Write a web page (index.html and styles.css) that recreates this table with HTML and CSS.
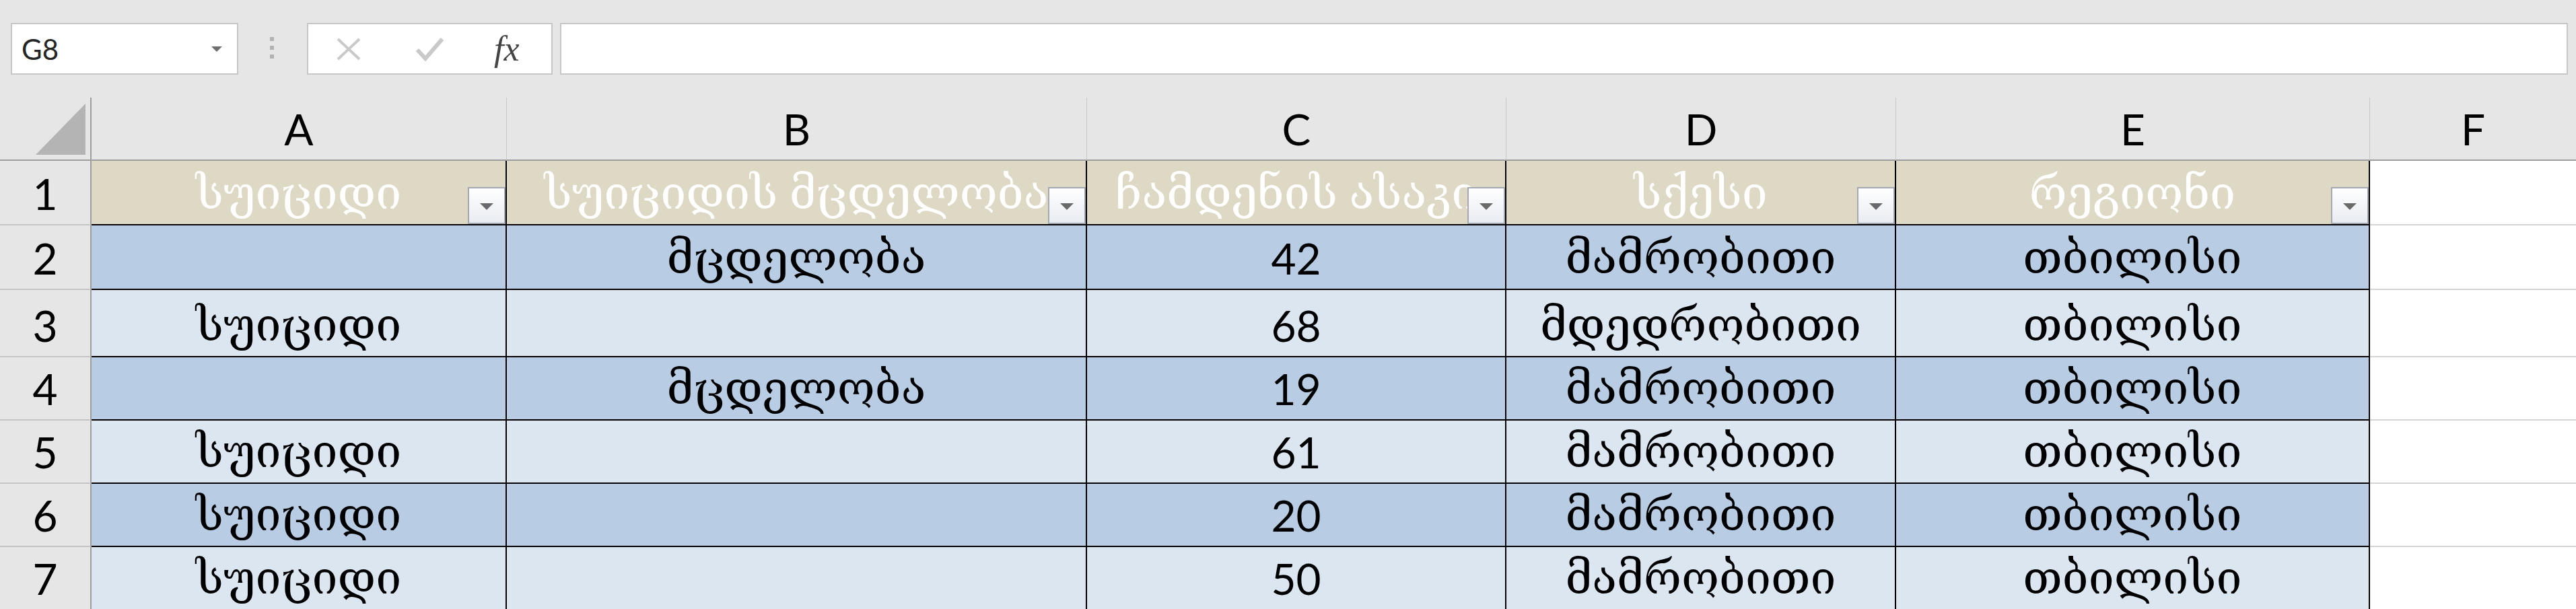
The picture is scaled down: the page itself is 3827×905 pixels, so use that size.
FILE: index.html
```html
<!DOCTYPE html>
<html lang="ka">
<head>
    <meta charset="UTF-8">
    <title>Book1 - Excel</title>
    <link rel="stylesheet" href="styles.css">
</head>
<body>
    <!-- formula bar -->
    <div class="fbar">
        <div class="namebox"><span>G8</span><i class="nb-arrow"></i></div>
        <div class="grip"><i></i><i></i><i></i></div>
        <div class="fbtns">
            <svg class="ico-x" width="38" height="34" viewBox="0 0 38 34"><path d="M3 2 L35 32 M35 2 L3 32" stroke="#c9c9c9" stroke-width="4" fill="none"/></svg>
            <svg class="ico-ok" width="43" height="36" viewBox="0 0 43 36"><path d="M3 19 L15 32 L40 3" stroke="#c9c9c9" stroke-width="6" fill="none"/></svg>
            <span class="fx">fx</span>
        </div>
        <div class="finput"></div>
    </div>

    <!-- sheet -->
    <div class="sheet">
        <div class="corner"><i class="tri"></i></div>
        <div class="colhd">A</div>
        <div class="colhd">B</div>
        <div class="colhd">C</div>
        <div class="colhd">D</div>
        <div class="colhd">E</div>
        <div class="colhd last">F</div>

        <div class="rowhd">1</div>
        <div class="cell hd"><span class="ka">სუიციდი</span><b class="filter"></b></div>
        <div class="cell hd"><span class="ka">სუიციდის მცდელობა</span><b class="filter"></b></div>
        <div class="cell hd"><span class="ka">ჩამდენის ასაკი</span><b class="filter"></b></div>
        <div class="cell hd"><span class="ka">სქესი</span><b class="filter"></b></div>
        <div class="cell hd"><span class="ka">რეგიონი</span><b class="filter"></b></div>
        <div class="cell free"></div>

        <div class="rowhd">2</div>
        <div class="cell dark"></div>
        <div class="cell dark"><span class="ka">მცდელობა</span></div>
        <div class="cell dark">42</div>
        <div class="cell dark"><span class="ka">მამრობითი</span></div>
        <div class="cell dark"><span class="ka">თბილისი</span></div>
        <div class="cell free"></div>

        <div class="rowhd">3</div>
        <div class="cell light"><span class="ka">სუიციდი</span></div>
        <div class="cell light"></div>
        <div class="cell light">68</div>
        <div class="cell light"><span class="ka">მდედრობითი</span></div>
        <div class="cell light"><span class="ka">თბილისი</span></div>
        <div class="cell free"></div>

        <div class="rowhd">4</div>
        <div class="cell dark"></div>
        <div class="cell dark"><span class="ka">მცდელობა</span></div>
        <div class="cell dark">19</div>
        <div class="cell dark"><span class="ka">მამრობითი</span></div>
        <div class="cell dark"><span class="ka">თბილისი</span></div>
        <div class="cell free"></div>

        <div class="rowhd">5</div>
        <div class="cell light"><span class="ka">სუიციდი</span></div>
        <div class="cell light"></div>
        <div class="cell light">61</div>
        <div class="cell light"><span class="ka">მამრობითი</span></div>
        <div class="cell light"><span class="ka">თბილისი</span></div>
        <div class="cell free"></div>

        <div class="rowhd">6</div>
        <div class="cell dark"><span class="ka">სუიციდი</span></div>
        <div class="cell dark"></div>
        <div class="cell dark">20</div>
        <div class="cell dark"><span class="ka">მამრობითი</span></div>
        <div class="cell dark"><span class="ka">თბილისი</span></div>
        <div class="cell free"></div>

        <div class="rowhd">7</div>
        <div class="cell light"><span class="ka">სუიციდი</span></div>
        <div class="cell light"></div>
        <div class="cell light">50</div>
        <div class="cell light"><span class="ka">მამრობითი</span></div>
        <div class="cell light"><span class="ka">თბილისი</span></div>
        <div class="cell free"></div>
    </div>
</body>
</html>
```

FILE: styles.css
```css
* {
    margin: 0;
    padding: 0;
    box-sizing: border-box;
}
body {
    width: 3827px;
    height: 905px;
    overflow: hidden;
    background: #e6e6e6;
    font-family: Lato, "DejaVu Serif", serif;
    color: #000;
}

/* formula bar */
.fbar {
    display: flex;
    align-items: flex-start;
    height: 145px;
    padding: 34px 12px 0 16px;
}
.namebox {
    width: 338px;
    height: 77px;
    background: #fff;
    border: 2px solid #c6c6c6;
    display: flex;
    align-items: center;
    justify-content: space-between;
    padding: 0 22px 0 14px;
    font-size: 42px;
    color: #262626;
}
.nb-arrow {
    border-left: 8px solid transparent;
    border-right: 8px solid transparent;
    border-top: 8px solid #6e6e6e;
}
.grip {
    display: flex;
    flex-direction: column;
    gap: 7px;
    margin: 21px 0 0 47px;
}
.grip i {
    width: 6px;
    height: 6px;
    background: #b2b2b2;
}
.fbtns {
    display: flex;
    align-items: center;
    width: 365px;
    height: 77px;
    margin-left: 49px;
    padding-left: 41px;
    background: #fff;
    border: 2px solid #c6c6c6;
}
.ico-ok {
    margin-left: 80px;
}
.fx {
    margin-left: 74px;
    font-family: "Liberation Serif", serif;
    font-style: italic;
    font-size: 52px;
    color: #444;
}
.finput {
    flex: 1;
    height: 77px;
    margin-left: 11px;
    background: #fff;
    border: 2px solid #c6c6c6;
}

/* grid */
.sheet {
    display: grid;
    grid-template-columns: 136px 617px 862px 623px 579px 704px 1fr;
    grid-template-rows: 94px 96px 96px 100px 94px 94px 94px 94px;
    font-size: 64px;
    line-height: 1;
}
.corner {
    position: relative;
    border-right: 2px solid #9e9e9e;
    border-bottom: 2px solid #9e9e9e;
}
.tri {
    position: absolute;
    left: 53px;
    bottom: 7px;
    width: 0;
    height: 0;
    border-left: 74px solid transparent;
    border-bottom: 76px solid #b4b4b4;
}
.colhd,
.rowhd,
.cell {
    display: flex;
    align-items: flex-end;
    justify-content: center;
    padding-bottom: 13px;
    white-space: nowrap;
}
.colhd {
    border-right: 1px solid #c8c8c8;
    border-bottom: 2px solid #9e9e9e;
}
.colhd.last {
    border-right: 0;
}
.rowhd {
    border-right: 2px solid #9e9e9e;
    border-bottom: 2px solid #c4c4c4;
}
.cell {
    position: relative;
    overflow: hidden;
    border-right: 2px solid #000;
    border-bottom: 2px solid #000;
}
.ka {
    font-size: 68px;
    margin-bottom: 2px;
}
.hd {
    background: #ddd9c4;
    color: #fff;
}
.dark {
    background: #b8cce4;
}
.light {
    background: #dce6f1;
}
.free {
    background: #fff;
    border-right: 0;
    border-bottom: 2px solid #d4d4d4;
}

/* autofilter button */
.filter {
    position: absolute;
    right: 0;
    bottom: 0;
    width: 56px;
    height: 55px;
    border: 2px solid #a4a8b0;
    background: linear-gradient(#fff, #e8ebf2);
}
.filter:after {
    content: "";
    position: absolute;
    left: 16px;
    top: 22px;
    border-left: 10px solid transparent;
    border-right: 10px solid transparent;
    border-top: 10px solid #6a6a6a;
}
```
